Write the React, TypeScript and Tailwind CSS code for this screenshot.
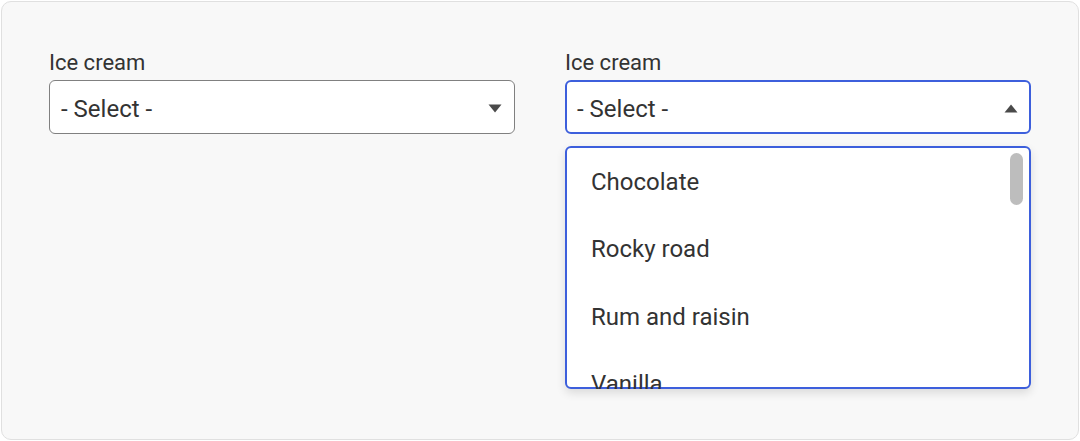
import React from 'react';

const options = ['Chocolate', 'Rocky road', 'Rum and raisin', 'Vanilla'];

function Caret({ up }: { up?: boolean }) {
  return (
    <svg width="14" height="9" viewBox="0 0 14 9" className="shrink-0 mt-[2px]">
      {up ? (
        <path d="M0.5 8.5 L7 0.5 L13.5 8.5 Z" fill="#4a4a4a" />
      ) : (
        <path d="M0.5 0.5 L13.5 0.5 L7 8.5 Z" fill="#4a4a4a" />
      )}
    </svg>
  );
}

export default function App() {
  return (
    <div className="w-[1080px] h-[441px] bg-white p-px" style={{ fontFamily: 'Roboto, "Noto Sans", sans-serif' }}>
      <div className="h-full rounded-[10px] border border-[#e0e0e0] bg-[#f8f8f8] pt-[48px] px-[47px]">
        <div className="grid grid-cols-2 gap-[50px]">
          {/* Closed select */}
          <div>
            <div className="text-[22px] leading-[26px] text-[#333] mb-[4px]">Ice cream</div>
            <div className="h-[54px] rounded-[6px] border border-[#808080] bg-white flex items-center justify-between pl-[11px] pr-[12px]">
              <span className="text-[24px] text-[#333] pt-[3px]">- Select -</span>
              <Caret />
            </div>
          </div>

          {/* Open select */}
          <div className="relative">
            <div className="text-[22px] leading-[26px] text-[#333] mb-[4px]">Ice cream</div>
            <div className="h-[54px] rounded-[6px] border-2 border-[#3d5fdc] bg-white flex items-center justify-between pl-[10px] pr-[11px]">
              <span className="text-[24px] text-[#333] pt-[3px]">- Select -</span>
              <Caret up />
            </div>

            <div className="absolute left-0 right-0 top-[96px] h-[243px] rounded-[6px] border-2 border-[#3d5fdc] bg-white shadow-[0_4px_10px_rgba(0,0,0,0.12)]">
              <div className="absolute left-0 right-0 top-0 -bottom-[2px] overflow-hidden">
                {options.map((o) => (
                  <div key={o} className="h-[67.5px] flex items-center pl-[24px] text-[24px] text-[#333]">
                    {o}
                  </div>
                ))}
              </div>
              <div className="absolute right-[6px] top-[5px] w-[13px] h-[52px] rounded-full bg-[#bdbdbd]" />
            </div>
          </div>
        </div>
      </div>
    </div>
  );
}
